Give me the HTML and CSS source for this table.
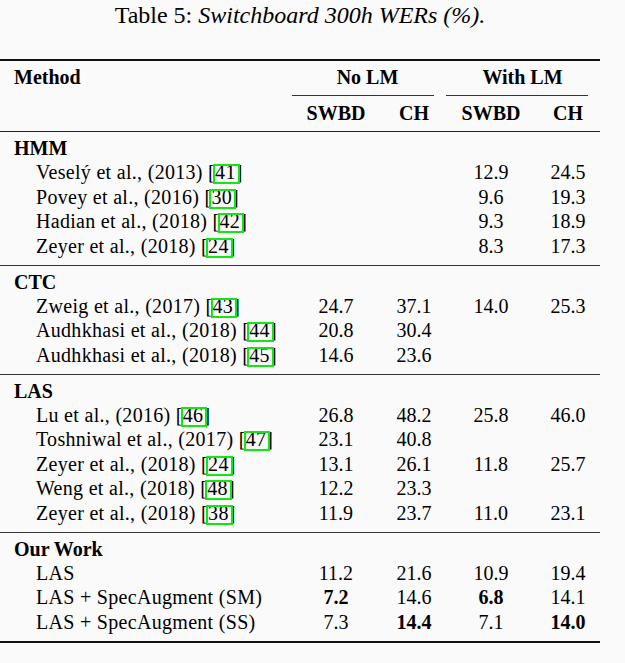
FILE: index.html
```html
<!DOCTYPE html>
<html>
<head>
<meta charset="utf-8">
<link rel="stylesheet" href="styles.css">
</head>
<body>
<div class="wrap">
  <div class="caption">Table 5: <em>Switchboard 300h WERs (%).</em></div>
  <div class="table">
    <div class="head grid">
      <div class="cell label">Method</div>
      <div class="cell span1 b grp">No LM</div>
      <div class="cell span2 b grp">With LM</div>
      <div class="cmid span1"></div>
      <div class="cmid span2 r2"></div>
      <div class="cell label"></div>
      <div class="cell b">SWBD</div>
      <div class="cell b">CH</div>
      <div class="cell b">SWBD</div>
      <div class="cell b">CH</div>
    </div>

    <div class="group grid">
      <div class="cell label full">HMM</div>
      <div class="cell name">Veselý et al., (2013) [<span class="cite">41</span>]</div>
      <div class="cell"></div><div class="cell"></div><div class="cell">12.9</div><div class="cell">24.5</div>
      <div class="cell name">Povey et al., (2016) [<span class="cite">30</span>]</div>
      <div class="cell"></div><div class="cell"></div><div class="cell">9.6</div><div class="cell">19.3</div>
      <div class="cell name">Hadian et al., (2018) [<span class="cite">42</span>]</div>
      <div class="cell"></div><div class="cell"></div><div class="cell">9.3</div><div class="cell">18.9</div>
      <div class="cell name">Zeyer et al., (2018) [<span class="cite">24</span>]</div>
      <div class="cell"></div><div class="cell"></div><div class="cell">8.3</div><div class="cell">17.3</div>
    </div>

    <div class="group grid">
      <div class="cell label full">CTC</div>
      <div class="cell name">Zweig et al., (2017) [<span class="cite">43</span>]</div>
      <div class="cell">24.7</div><div class="cell">37.1</div><div class="cell">14.0</div><div class="cell">25.3</div>
      <div class="cell name">Audhkhasi et al., (2018) [<span class="cite">44</span>]</div>
      <div class="cell">20.8</div><div class="cell">30.4</div><div class="cell"></div><div class="cell"></div>
      <div class="cell name">Audhkhasi et al., (2018) [<span class="cite">45</span>]</div>
      <div class="cell">14.6</div><div class="cell">23.6</div><div class="cell"></div><div class="cell"></div>
    </div>

    <div class="group grid">
      <div class="cell label full">LAS</div>
      <div class="cell name">Lu et al., (2016) [<span class="cite">46</span>]</div>
      <div class="cell">26.8</div><div class="cell">48.2</div><div class="cell">25.8</div><div class="cell">46.0</div>
      <div class="cell name">Toshniwal et al., (2017) [<span class="cite">47</span>]</div>
      <div class="cell">23.1</div><div class="cell">40.8</div><div class="cell"></div><div class="cell"></div>
      <div class="cell name">Zeyer et al., (2018) [<span class="cite">24</span>]</div>
      <div class="cell">13.1</div><div class="cell">26.1</div><div class="cell">11.8</div><div class="cell">25.7</div>
      <div class="cell name">Weng et al., (2018) [<span class="cite">48</span>]</div>
      <div class="cell">12.2</div><div class="cell">23.3</div><div class="cell"></div><div class="cell"></div>
      <div class="cell name">Zeyer et al., (2018) [<span class="cite">38</span>]</div>
      <div class="cell">11.9</div><div class="cell">23.7</div><div class="cell">11.0</div><div class="cell">23.1</div>
    </div>

    <div class="group grid last">
      <div class="cell label full">Our Work</div>
      <div class="cell name">LAS</div>
      <div class="cell">11.2</div><div class="cell">21.6</div><div class="cell">10.9</div><div class="cell">19.4</div>
      <div class="cell name">LAS + SpecAugment (SM)</div>
      <div class="cell b">7.2</div><div class="cell">14.6</div><div class="cell b">6.8</div><div class="cell">14.1</div>
      <div class="cell name">LAS + SpecAugment (SS)</div>
      <div class="cell">7.3</div><div class="cell b">14.4</div><div class="cell">7.1</div><div class="cell b">14.0</div>
    </div>
  </div>
</div>
</body>
</html>
```

FILE: styles.css
```css
html, body {
  margin: 0;
  padding: 0;
  background: #fafafa;
}
body {
  font-family: "Liberation Serif", "Times New Roman", serif;
  color: #000;
  font-size: 20px;
}
.wrap {
  width: 600px;
}
.caption {
  padding-top: 2px;
  font-size: 24px;
  line-height: 26px;
  text-align: center;
}
.caption em {
  font-style: italic;
}
.table {
  margin-top: 31px;
  border-top: 2px solid #111;
  border-bottom: 2px solid #111;
}
.grid {
  display: grid;
  grid-template-columns: 284px 104px 52px 102px 52px;
}
.head {
  padding-top: 4px;
  padding-bottom: 5.6px;
  border-bottom: 1px solid #222;
}
.cell {
  line-height: 24.4px;
  text-align: center;
  white-space: nowrap;
}
.b {
  font-weight: bold;
}
.label {
  text-align: left;
  padding-left: 14px;
  font-weight: bold;
}
.full {
  grid-column: 1 / -1;
}
.name {
  text-align: left;
  padding-left: 36px;
  letter-spacing: 0.3px;
}
.span1 {
  grid-column: 2 / 4;
}
.span2 {
  grid-column: 4 / 6;
}
.grp {
  padding-left: 11px;
}
.cmid {
  height: 1px;
  background: #333;
  margin: 5.6px 6px 5px 8px;
}
.cmid.r2 {
  margin-left: 6px;
}
.group {
  padding-top: 4px;
  padding-bottom: 6.5px;
  border-bottom: 1px solid #333;
}
.group.last {
  border-bottom: none;
}
.cite {
  position: relative;
}
.cite::after {
  content: "";
  position: absolute;
  left: -2px;
  right: -4px;
  top: 3px;
  bottom: -1px;
  border: 2px solid #14e614;
}
```
